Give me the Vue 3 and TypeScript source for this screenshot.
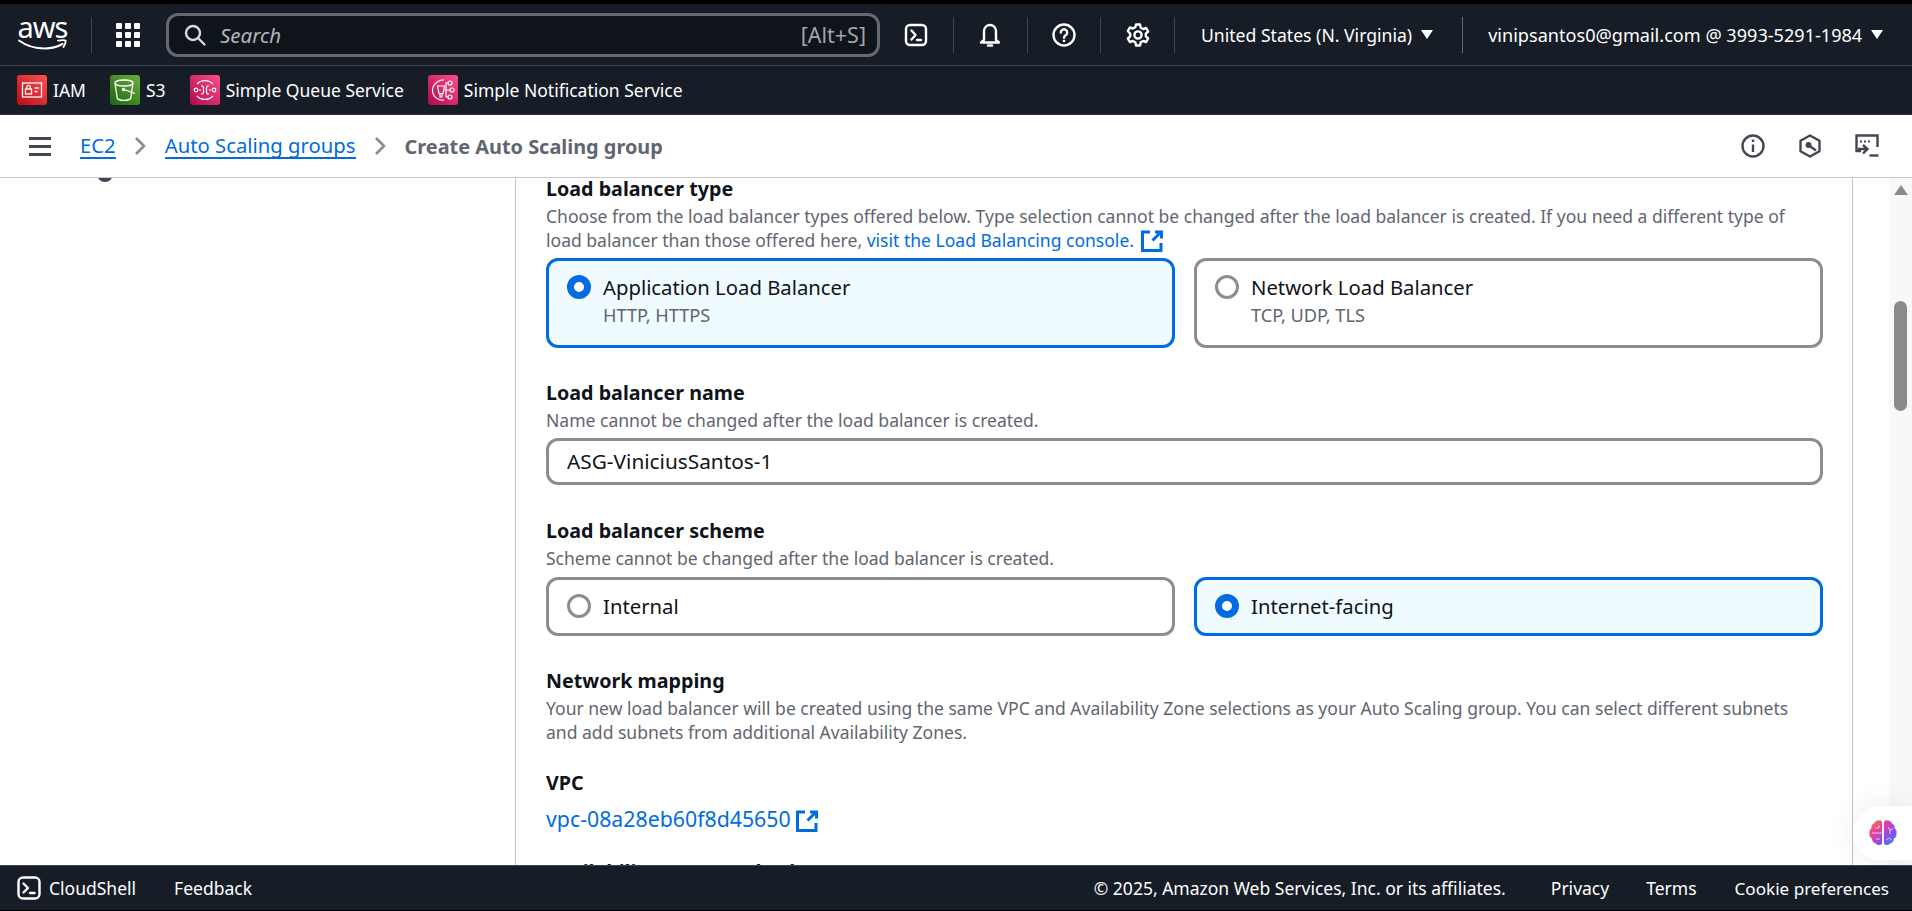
<template>
  <div class="console">
    <header class="top-nav">
      <div class="aws-logo">
        <span class="aws-word">aws</span>
        <svg class="aws-smile" viewBox="0 0 49 12" fill="none">
          <path d="M1 2.5C9 8.5 19 10.5 27 10.5C33 10.5 39 9 44.5 6" stroke="#fff" stroke-width="2" stroke-linecap="round" />
          <path d="M40 2.6C43 2.2 46.5 2 47.5 2.6C48 4 46.7 7 45.5 9" stroke="#fff" stroke-width="1.8" stroke-linecap="round" />
        </svg>
      </div>
      <span class="logo-sep"></span>
      <svg class="grid-icon" viewBox="0 0 24 24" fill="#fff">
        <template v-for="y in [0, 9, 18]" :key="y">
          <rect v-for="x in [0, 9, 18]" :key="x" :x="x" :y="y" width="6" height="6" rx="1" />
        </template>
      </svg>
      <div class="search-box">
        <svg class="search-icon" viewBox="0 0 22 22" fill="none" stroke="#d5d9de" stroke-width="2.4">
          <circle cx="9" cy="9" r="7" />
          <path d="M14 14l6.5 6.5" stroke-linecap="round" />
        </svg>
        <span class="search-placeholder">Search</span>
        <span class="search-hint">[Alt+S]</span>
      </div>
      <div class="nav-util">
        <svg viewBox="0 0 24 24" fill="none" stroke="#fff" stroke-width="2.4">
          <rect x="2" y="2" width="20" height="20" rx="4" />
          <path d="M7.5 7.5l4 4.5-4 4.5M13 17h4" stroke-linecap="round" stroke-linejoin="round" />
        </svg>
      </div>
      <div class="nav-util">
        <svg viewBox="0 0 24 24" fill="none" stroke="#fff" stroke-width="2.4" stroke-linejoin="round">
          <path d="M6 17V8a6 6 0 0 1 12 0v9l3 2.5H3z" />
          <path d="M10 22.5h4" stroke-linecap="round" />
        </svg>
      </div>
      <div class="nav-util">
        <svg viewBox="0 0 24 24" fill="none" stroke="#fff" stroke-width="2.4">
          <circle cx="12" cy="12" r="10.5" />
          <path d="M8.8 9.5a3.2 3.2 0 1 1 4.8 2.8c-1 .6-1.6 1.2-1.6 2.4" stroke-linecap="round" />
          <circle cx="12" cy="18" r="1.3" fill="#fff" stroke="none" />
        </svg>
      </div>
      <div class="nav-util">
        <svg viewBox="0 0 24 24" fill="none" stroke="#fff" stroke-width="2.4" stroke-linejoin="round">
          <path d="M10 1.5h4l.7 3.2 2.4 1.3 3.1-1 2 3.5-2.4 2.2v2.6l2.4 2.2-2 3.5-3.1-1-2.4 1.3-.7 3.2h-4l-.7-3.2-2.4-1.3-3.1 1-2-3.5 2.4-2.2v-2.6L1.8 8l2-3.5 3.1 1 2.4-1.3z" />
          <circle cx="12" cy="12" r="3.6" />
        </svg>
      </div>
      <div class="nav-menu region-menu">
        <span>United States (N. Virginia)</span><i class="caret"></i>
      </div>
      <div class="nav-menu user-menu">
        <span>vinipsantos0@gmail.com @ 3993-5291-1984</span><i class="caret"></i>
      </div>
    </header>

    <nav class="shortcuts">
      <a v-for="s in services" :key="s.name" class="shortcut">
        <span class="svc-icon" :class="s.tone">
          <svg v-if="s.name === 'IAM'" viewBox="0 0 30 30" fill="none" stroke="#fff" stroke-width="1.3">
            <rect x="5.5" y="8" width="19" height="14" />
            <rect x="8.5" y="14" width="6" height="5" />
            <path d="M9.8 14v-2a1.7 1.7 0 0 1 3.4 0v2M17.5 13H22M17.5 16.5h3" />
          </svg>
          <svg v-else-if="s.name === 'S3'" viewBox="0 0 30 30" fill="none" stroke="#fff" stroke-width="1.3">
            <ellipse cx="14" cy="8" rx="9" ry="3" />
            <path d="M5 8l2.2 15c.3 1.4 3.3 2.3 6.8 2.3s6.5-.9 6.8-2.3L23 8" />
            <path d="M14 14.5l11 4" />
            <circle cx="13.5" cy="14.5" r="1" fill="#fff" />
          </svg>
          <svg v-else-if="s.name === 'Simple Queue Service'" viewBox="0 0 30 30" fill="none" stroke="#fff" stroke-width="1.2">
            <path d="M7 9a11 11 0 0 1 16 0M7 21a11 11 0 0 0 16 0" />
            <circle cx="6" cy="15" r="1.8" />
            <circle cx="24" cy="15" r="1.8" />
            <path d="M11 11h1.5l1 1.5v5l-1 1.5H11M19 11h-1.5l-1 1.5v5l1 1.5H19M9 15h2M19 15h2" />
          </svg>
          <svg v-else viewBox="0 0 30 30" fill="none" stroke="#fff" stroke-width="1.2">
            <path d="M16 5a10 10 0 0 0-6 1.5C6 9 4.5 12 4.5 15c0 4 2.5 8 6.5 9.5 1.7.6 3.5.7 5 .5" />
            <path d="M9.5 11h7L15 18.5h-4zM12 18.5V22h2v-3.5" />
            <circle cx="22" cy="8" r="2" />
            <circle cx="24" cy="15" r="2" />
            <circle cx="22" cy="22" r="2" />
            <path d="M16.5 15H22M18 15V8h2M18 15v7h2" />
          </svg>
        </span>
        <span>{{ s.name }}</span>
      </a>
    </nav>

    <div class="crumb-bar">
      <div class="hamburger"><i></i><i></i><i></i></div>
      <a class="crumb-link">EC2</a>
      <svg class="crumb-sep" viewBox="0 0 12 20" fill="none"><path d="M2 2l8 8-8 8" stroke="#8c8c94" stroke-width="2.6" /></svg>
      <a class="crumb-link">Auto Scaling groups</a>
      <svg class="crumb-sep" viewBox="0 0 12 20" fill="none"><path d="M2 2l8 8-8 8" stroke="#8c8c94" stroke-width="2.6" /></svg>
      <span class="crumb-current">Create Auto Scaling group</span>
      <div class="crumb-tools">
        <svg viewBox="0 0 24 24" fill="none" stroke="#424650" stroke-width="2.4">
          <circle cx="12" cy="12" r="10.5" />
          <path d="M12 10.5V18" />
          <circle cx="12" cy="6.8" r="1.4" fill="#424650" stroke="none" />
        </svg>
        <svg viewBox="0 0 24 24" fill="none" stroke="#424650" stroke-width="2.4" stroke-linejoin="round">
          <path d="M12 1.5l9.5 5.3v10.4L12 22.5l-9.5-5.3V6.8z" />
          <circle cx="10.5" cy="11" r="3" fill="#424650" stroke="none" />
          <path d="M11 11.5l7 5" />
        </svg>
        <svg viewBox="0 0 24 24" fill="none" stroke="#424650" stroke-width="2.4">
          <path d="M6 17H1.5V1.5h21V13" />
          <path d="M5 6.5h2v2H5zM9 6.5h2v2H9zM13 6.5h2v2h-2z" fill="#424650" stroke="none" />
          <path d="M3 15h8M8 11l4.5 4L8 19.500" />
          <path d="M14.5 21.5h9" />
        </svg>
      </div>
    </div>

    <main class="workspace">
      <aside class="side-nav"><span class="step-dot"></span></aside>
      <section class="form-col">
        <h4 class="field-label">Load balancer type</h4>
        <p class="field-desc">
          Choose from the load balancer types offered below. Type selection cannot be changed after the load balancer is created. If you need a different type of<br>
          load balancer than those offered here, <a class="link">visit the Load Balancing console.</a><svg class="ext-icon" viewBox="0 0 22 22" fill="none" stroke="#006ce0" stroke-width="3"><path d="M9 2H1.5v18.500H20V13" /><path d="M14 2h6.5v6.500M20 2l-8.500 8.500" /></svg>
        </p>
        <div class="tile-row type-row">
          <div v-for="t in lbTypes" :key="t.label" class="tile" :class="{ selected: t.selected }">
            <span class="radio" :class="{ on: t.selected }"></span>
            <div>
              <div class="tile-label">{{ t.label }}</div>
              <div class="tile-sub">{{ t.sub }}</div>
            </div>
          </div>
        </div>

        <h4 class="field-label name-label">Load balancer name</h4>
        <p class="field-desc">Name cannot be changed after the load balancer is created.</p>
        <div class="text-input">ASG-ViniciusSantos-1</div>

        <h4 class="field-label scheme-label">Load balancer scheme</h4>
        <p class="field-desc">Scheme cannot be changed after the load balancer is created.</p>
        <div class="tile-row scheme-row">
          <div v-for="t in schemes" :key="t.label" class="tile" :class="{ selected: t.selected }">
            <span class="radio" :class="{ on: t.selected }"></span>
            <div class="tile-label">{{ t.label }}</div>
          </div>
        </div>

        <h4 class="field-label name-label">Network mapping</h4>
        <p class="field-desc">
          Your new load balancer will be created using the same VPC and Availability Zone selections as your Auto Scaling group. You can select different subnets<br>
          and add subnets from additional Availability Zones.
        </p>

        <h4 class="field-label vpc-label">VPC</h4>
        <div class="vpc-value">
          <a class="link">vpc-08a28eb60f8d45650</a><svg class="ext-icon" viewBox="0 0 22 22" fill="none" stroke="#006ce0" stroke-width="3"><path d="M9 2H1.5v18.500H20V13" /><path d="M14 2h6.5v6.500M20 2l-8.500 8.500" /></svg>
        </div>

        <h4 class="field-label az-label">Availability Zones and subnets</h4>
      </section>
      <div class="rail"></div>
      <div class="scrollbar">
        <i class="scroll-up"></i>
        <i class="scroll-thumb"></i>
      </div>
      <div class="assistant">
        <svg viewBox="0 0 28 26">
          <defs>
            <linearGradient id="brainFill" x1="0" y1="0" x2="1" y2="1">
              <stop offset="0" stop-color="#f9862a" />
              <stop offset=".35" stop-color="#e83ea8" />
              <stop offset=".65" stop-color="#8f4be8" />
              <stop offset="1" stop-color="#2f8cf5" />
            </linearGradient>
          </defs>
          <path d="M13 2.5C13 1 11 0 9 .5 7 .6 5.5 2 5 3.5 3 4 2 6 2.5 8 .8 9.5 0 11.5.5 13.5.2 15.5 1.2 17.5 3 18.5c0 2.5 1.5 4.5 3.8 5 1.8 1.8 4.700 2.200 6.200.5zM15 2.500C15 1 17 0 19 .5c2 .1 3.500 1.500 4 3 2 .5 3 2.500 2.500 4.500 1.700 1.500 2.500 3.500 2 5.500.3 2-.7 4-2.500 5 0 2.500-1.500 4.500-3.800 5-1.800 1.800-4.700 2.200-6.200.5z" fill="url(#brainFill)" />
          <path d="M3 13h10M6 8h4V5M7 19h4M19 7l2 3 3-1M21 10v4M17 20l3-2 3 2" stroke="#fff" stroke-width=".8" fill="none" opacity=".85" />
        </svg>
      </div>
    </main>

    <footer class="page-footer">
      <svg class="shell-icon" viewBox="0 0 24 24" fill="none" stroke="#fff" stroke-width="2.4">
        <rect x="1.5" y="1.5" width="21" height="21" rx="4.5" />
        <path d="M6.5 7.5L11 12l-4.500 4.500M13 17h4.500" stroke-linecap="round" stroke-linejoin="round" />
      </svg>
      <span class="shell-label">CloudShell</span>
      <span class="feedback">Feedback</span>
      <span class="copyright">© 2025, Amazon Web Services, Inc. or its affiliates.</span>
      <span class="privacy">Privacy</span>
      <span class="terms">Terms</span>
      <span class="cookies">Cookie preferences</span>
    </footer>
  </div>
</template>

<script setup lang="ts">
interface Choice {
  label: string
  sub?: string
  selected: boolean
}

const services = [
  { name: 'IAM', tone: 'red' },
  { name: 'S3', tone: 'green' },
  { name: 'Simple Queue Service', tone: 'pink' },
  { name: 'Simple Notification Service', tone: 'pink' }
]

const lbTypes: Choice[] = [
  { label: 'Application Load Balancer', sub: 'HTTP, HTTPS', selected: true },
  { label: 'Network Load Balancer', sub: 'TCP, UDP, TLS', selected: false }
]

const schemes: Choice[] = [
  { label: 'Internal', selected: false },
  { label: 'Internet-facing', selected: true }
]
</script>

<style>
html, body { margin: 0; background: #fff; overflow: hidden; }
</style>

<style scoped>
.console {
  height: 911px;
  display: flex;
  flex-direction: column;
  overflow: hidden;
  font-family: "Noto Sans", "Open Sans", sans-serif;
  font-size: 17.5px;
  color: #0f141a;
  background: #fff;
}

/* top bar */
.top-nav {
  height: 61px;
  flex-shrink: 0;
  box-sizing: content-box;
  border-top: 4px solid #000;
  border-bottom: 1px solid #424650;
  background: #161d26;
  display: flex;
  align-items: center;
  color: #fff;
}
.aws-logo {
  width: 49px;
  margin-left: 18px;
  height: 30px;
  display: flex;
  flex-direction: column;
  align-items: center;
}
.aws-word {
  font-size: 29px;
  line-height: 14px;
  letter-spacing: -1px;
  height: 19px;
}
.aws-smile { width: 49px; height: 12px; flex-shrink: 0; }
.logo-sep {
  width: 1px;
  height: 36px;
  margin-left: 24px;
  background: #424650;
}
.grid-icon { width: 24px; height: 24px; margin-left: 24px; }
.search-box {
  width: 714px;
  height: 44px;
  box-sizing: border-box;
  margin-left: 26px;
  border: 3px solid #656871;
  border-radius: 12px;
  background: #0f141a;
  display: flex;
  align-items: center;
  padding: 0 11px 0 15px;
}
.search-icon { width: 22px; height: 22px; flex-shrink: 0; }
.search-placeholder { margin-left: 14px; font-size: 20.5px; font-style: italic; color: #b4b4bb; }
.search-hint { margin-left: auto; font-size: 21.5px; color: #a4a4ad; }
.nav-util {
  width: 73.75px;
  height: 36px;
  display: flex;
  align-items: center;
  justify-content: center;
  border-right: 1px solid #424650;
  box-sizing: border-box;
}
.nav-util svg { width: 24px; height: 24px; }
.nav-menu { display: flex; align-items: center; height: 36px; }
.region-menu {
  padding: 0 29px 0 26px;
  font-size: 17.6px;
  border-right: 1px solid #656871;
}
.user-menu { padding-left: 25px; font-size: 18.1px; }
.caret {
  width: 0;
  height: 0;
  margin-left: 9px;
  border-left: 6.5px solid transparent;
  border-right: 6.5px solid transparent;
  border-top: 9px solid #fff;
}

/* favourites */
.shortcuts {
  height: 48px;
  flex-shrink: 0;
  background: #161d26;
  border-bottom: 1px solid #2c333d;
  display: flex;
  align-items: center;
  padding-left: 17px;
  gap: 24px;
  color: #fff;
}
.shortcut { display: flex; align-items: center; gap: 6px; }
.svc-icon {
  width: 30px;
  height: 30px;
  border-radius: 3px;
  display: block;
}
.svc-icon svg { display: block; width: 30px; height: 30px; }
.red { background: linear-gradient(45deg, #bd0816, #ff5252); }
.green { background: linear-gradient(45deg, #1b660f, #6cae3e); }
.pink { background: linear-gradient(45deg, #b0084d, #ff4f8b); }

/* breadcrumbs */
.crumb-bar {
  height: 62px;
  flex-shrink: 0;
  border-bottom: 1px solid #c6c6cd;
  box-sizing: content-box;
  display: flex;
  align-items: center;
  font-size: 20.3px;
}
.hamburger {
  width: 22px;
  margin-left: 29px;
  margin-right: 29px;
  display: flex;
  flex-direction: column;
  gap: 5px;
}
.hamburger i { display: block; height: 3px; background: #424650; }
.crumb-link {
  color: #006ce0;
  border-bottom: 2px solid #006ce0;
  line-height: 24px;
}
.crumb-sep { width: 12px; height: 20px; margin: 0 18.5px; }
.crumb-current { font-size: 19.9px; color: #5f6670; font-weight: 700; }
.crumb-tools {
  margin-left: auto;
  margin-right: 33px;
  display: flex;
  gap: 33px;
}
.crumb-tools svg { width: 24px; height: 24px; display: block; }

/* content */
.workspace {
  flex: 1;
  min-height: 0;
  position: relative;
  display: flex;
  overflow: hidden;
}
.side-nav {
  width: 515px;
  flex-shrink: 0;
  border-right: 1px solid #c6c6cd;
  box-sizing: content-box;
  overflow: hidden;
}
.step-dot {
  display: block;
  width: 16px;
  height: 16px;
  margin: -12px 0 0 97px;
  border-radius: 50%;
  background: #424650;
}
.form-col {
  width: 1337px;
  flex-shrink: 0;
  box-sizing: border-box;
  padding: 0 29px 0 30px;
  border-right: 1px solid #c6c6cd;
}
.field-label {
  margin: 0;
  font-size: 19.7px;
  line-height: 22px;
  font-weight: 700;
  color: #0f141a;
}
.name-label { margin-top: 34px; }
.scheme-label { margin-top: 35px; }
.vpc-label { margin-top: 28px; }
.az-label { margin-top: 29px; }
.field-desc {
  margin: 4px 0 0;
  font-size: 17.55px;
  line-height: 24px;
  color: #5f6670;
}
.link { color: #006ce0; }
.ext-icon {
  width: 22px;
  height: 22px;
  margin-left: 7px;
  vertical-align: -5px;
}
.tile-row {
  display: grid;
  grid-template-columns: 1fr 1fr;
  gap: 19px;
  margin-top: 6px;
}
.scheme-row { margin-top: 7px; }
.tile {
  box-sizing: border-box;
  border: 3px solid #8c8c94;
  border-radius: 12px;
  display: flex;
  padding: 14px 18px;
  gap: 12px;
}
.type-row .tile { height: 90px; }
.scheme-row .tile { height: 59px; }
.tile.selected {
  border-color: #006ce0;
  background: #f0fbff;
}
.radio {
  width: 24px;
  height: 24px;
  box-sizing: border-box;
  flex-shrink: 0;
  border-radius: 50%;
  border: 3px solid #8c8c94;
  background: #fff;
}
.radio.on { border: 7px solid #006ce0; }
.tile-label { font-size: 20.3px; line-height: 24px; color: #0f141a; }
.tile-sub { font-size: 18.2px; line-height: 24px; margin-top: 4px; color: #5f6670; }
.text-input {
  margin-top: 6px;
  height: 47px;
  box-sizing: border-box;
  border: 3px solid #8c8c94;
  border-radius: 12px;
  padding: 0 18px;
  line-height: 41px;
  font-size: 20.8px;
}
.vpc-value { margin-top: 13px; line-height: 24px; font-size: 21.3px; }
.vpc-value .ext-icon { margin-left: 5px; }

.rail { width: 36px; flex-shrink: 0; }
.scrollbar {
  flex: 1;
  background: #f8f8f8;
  display: flex;
  flex-direction: column;
  align-items: center;
}
.scroll-up {
  width: 0;
  height: 0;
  margin-top: 7px;
  border-left: 7.5px solid transparent;
  border-right: 7.5px solid transparent;
  border-bottom: 10px solid #8a8a8a;
}
.scroll-thumb {
  width: 13px;
  height: 110px;
  margin-top: 106px;
  border-radius: 7px;
  background: #8a8a8a;
}
.assistant {
  position: absolute;
  right: 0;
  bottom: 5px;
  width: 59px;
  height: 54px;
  border-radius: 27px 0 0 27px;
  background: #fff;
  box-shadow: 0 0 30px rgba(0, 0, 0, .08);
  display: flex;
  align-items: center;
  padding-left: 16px;
  box-sizing: border-box;
}
.assistant svg { width: 28px; height: 26px; }

/* footer */
.page-footer {
  height: 44px;
  flex-shrink: 0;
  background: #161d26;
  border-top: 1px solid #424650;
  border-bottom: 1px solid #000;
  box-sizing: content-box;
  display: flex;
  align-items: center;
  color: #fff;
  font-size: 17.5px;
}
.shell-icon { width: 24px; height: 24px; margin-left: 17px; }
.shell-label { margin-left: 8px; }
.feedback { margin-left: 38px; }
.copyright { margin-left: auto; }
.privacy { margin-left: 45px; }
.terms { margin-left: 37px; }
.cookies { margin-left: 38px; margin-right: 23px; font-size: 17.1px; }
</style>
